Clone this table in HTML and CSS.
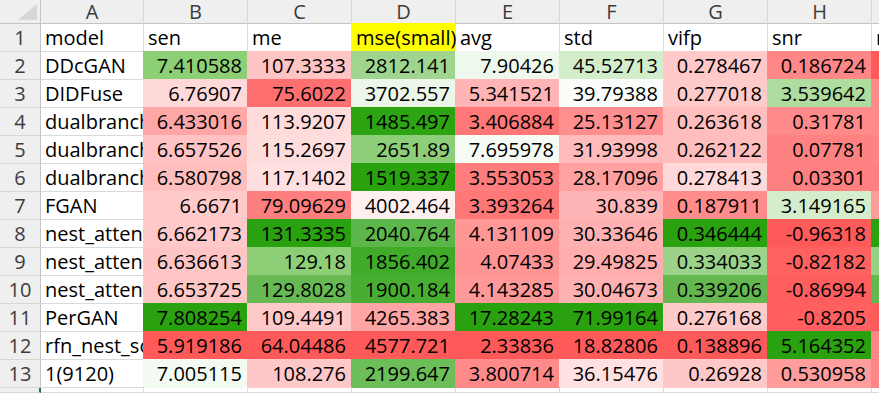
FILE: index.html
```html
<!DOCTYPE html>
<html>
<head>
<meta charset="utf-8">
<link rel="stylesheet" href="styles.css">
</head>
<body>
<div class="sheet">
  <div class="corner"><svg width="40" height="23" viewBox="0 0 40 23"><polygon points="37,4 37,20 18,20" fill="#d6d6d6"/></svg></div>
  <div class="ch">A</div><div class="ch">B</div><div class="ch">C</div><div class="ch">D</div><div class="ch">E</div><div class="ch">F</div><div class="ch">G</div><div class="ch">H</div><div class="ch">I</div>

  <div class="rh">1</div><div class="c">model</div><div class="c">sen</div><div class="c">me</div><div class="c f" style="--c:#ffff00">mse(small)</div><div class="c">avg</div><div class="c">std</div><div class="c">vifp</div><div class="c">snr</div><div class="c t">rmse</div>

  <div class="rh">2</div><div class="c t">DDcGAN</div>
  <div class="c n f" style="--c:#8ccf75">7.410588</div><div class="c n f" style="--c:#ffc4c4">107.3333</div><div class="c n f" style="--c:#9fd58e">2812.141</div><div class="c n f" style="--c:#eff8ec">7.90426</div><div class="c n f" style="--c:#d3ecca">45.52713</div><div class="c n f" style="--c:#ffc9c9">0.278467</div><div class="c n f" style="--c:#ff8787">0.186724</div><div class="c n f" style="--c:#ff5b5b"></div>

  <div class="rh">3</div><div class="c t">DIDFuse</div>
  <div class="c n f" style="--c:#ffd9d9">6.76907</div><div class="c n f" style="--c:#ff6f6f">75.6022</div><div class="c n f" style="--c:#ecf7e9">3702.557</div><div class="c n f" style="--c:#ffb5b5">5.341521</div><div class="c n f" style="--c:#fbfdfa">39.79388</div><div class="c n f" style="--c:#ffcaca">0.277018</div><div class="c n f" style="--c:#afdd9f">3.539642</div><div class="c n f" style="--c:#ff8b8b"></div>

  <div class="rh">4</div><div class="c t">dualbranch</div>
  <div class="c n f" style="--c:#ffa6a6">6.433016</div><div class="c n f" style="--c:#ffdbdb">113.9207</div><div class="c n f" style="--c:#2da512">1485.497</div><div class="c n f" style="--c:#ff7777">3.406884</div><div class="c n f" style="--c:#ff8f8f">25.13127</div><div class="c n f" style="--c:#ffbdbd">0.263618</div><div class="c n f" style="--c:#ff8a8a">0.31781</div><div class="c n f" style="--c:#ff8a8a"></div>

  <div class="rh">5</div><div class="c t">dualbranch</div>
  <div class="c n f" style="--c:#ffc3c3">6.657526</div><div class="c n f" style="--c:#ffdddd">115.2697</div><div class="c n f" style="--c:#8fce79">2651.89</div><div class="c n f" style="--c:#f6fbf4">7.695978</div><div class="c n f" style="--c:#ffbbbb">31.93998</div><div class="c n f" style="--c:#ffbdbd">0.262122</div><div class="c n f" style="--c:#ff8282">0.07781</div><div class="c n f" style="--c:#ff8484"></div>

  <div class="rh">6</div><div class="c t">dualbranch</div>
  <div class="c n f" style="--c:#ffbebe">6.580798</div><div class="c n f" style="--c:#ffdfdf">117.1402</div><div class="c n f" style="--c:#2aa10f">1519.337</div><div class="c n f" style="--c:#ff7d7d">3.553053</div><div class="c n f" style="--c:#ffa1a1">28.17096</div><div class="c n f" style="--c:#ffd9d9">0.278413</div><div class="c n f" style="--c:#ff8080">0.03301</div><div class="c n f" style="--c:#ff8080"></div>

  <div class="rh">7</div><div class="c t">FGAN</div>
  <div class="c n f" style="--c:#ffcaca">6.6671</div><div class="c n f" style="--c:#ff7f7f">79.09629</div><div class="c n f" style="--c:#fff0f0">4002.464</div><div class="c n f" style="--c:#ff7878">3.393264</div><div class="c n f" style="--c:#ffb5b5">30.839</div><div class="c n f" style="--c:#ff8b8b">0.187911</div><div class="c n f" style="--c:#d4edcb">3.149165</div><div class="c n f" style="--c:#ff9a9a"></div>

  <div class="rh">8</div><div class="c t">nest_attention</div>
  <div class="c n f" style="--c:#ffc9c9">6.662173</div><div class="c n f" style="--c:#2aa10f">131.3335</div><div class="c n f" style="--c:#5db649">2040.764</div><div class="c n f" style="--c:#ff9797">4.131109</div><div class="c n f" style="--c:#ffb1b1">30.33646</div><div class="c n f" style="--c:#2aa10f">0.346444</div><div class="c n f" style="--c:#ff5a5a">-0.96318</div><div class="c n f" style="--c:#2aa10f"></div>

  <div class="rh">9</div><div class="c t">nest_attention</div>
  <div class="c n f" style="--c:#ffc4c4">6.636613</div><div class="c n f" style="--c:#8dce76">129.18</div><div class="c n f" style="--c:#3fab29">1856.402</div><div class="c n f" style="--c:#ff9494">4.07433</div><div class="c n f" style="--c:#ffadad">29.49825</div><div class="c n f" style="--c:#9bd38a">0.334033</div><div class="c n f" style="--c:#ff6161">-0.82182</div><div class="c n f" style="--c:#96d283"></div>

  <div class="rh">10</div><div class="c t">nest_attention</div>
  <div class="c n f" style="--c:#ffc6c6">6.653725</div><div class="c n f" style="--c:#67ba53">129.8028</div><div class="c n f" style="--c:#48ae32">1900.184</div><div class="c n f" style="--c:#ff9999">4.143285</div><div class="c n f" style="--c:#ffb1b1">30.04673</div><div class="c n f" style="--c:#64b84f">0.339206</div><div class="c n f" style="--c:#ff5e5e">-0.86994</div><div class="c n f" style="--c:#62b84d"></div>

  <div class="rh">11</div><div class="c t">PerGAN</div>
  <div class="c n f" style="--c:#2aa10f">7.808254</div><div class="c n f" style="--c:#ffc9c9">109.4491</div><div class="c n f" style="--c:#ffa4a4">4265.383</div><div class="c n f" style="--c:#2aa10f">17.28243</div><div class="c n f" style="--c:#2aa10f">71.99164</div><div class="c n f" style="--c:#ffcaca">0.276168</div><div class="c n f" style="--c:#ff5f5f">-0.8205</div><div class="c n f" style="--c:#ff5b5b"></div>

  <div class="rh">12</div><div class="c t">rfn_nest_scale</div>
  <div class="c n f" style="--c:#ff5a5a">5.919186</div><div class="c n f" style="--c:#ff5a5a">64.04486</div><div class="c n f" style="--c:#ff5a5a">4577.721</div><div class="c n f" style="--c:#ff5a5a">2.33836</div><div class="c n f" style="--c:#ff5a5a">18.82806</div><div class="c n f" style="--c:#ff5a5a">0.138896</div><div class="c n f" style="--c:#2aa10f">5.164352</div><div class="c n f" style="--c:#ff8686"></div>

  <div class="rh">13</div><div class="c t">1(9120)</div>
  <div class="c n f" style="--c:#f3faf1">7.005115</div><div class="c n f" style="--c:#ffc8c8">108.276</div><div class="c n f" style="--c:#6bbe58">2199.647</div><div class="c n f" style="--c:#ff8a8a">3.800714</div><div class="c n f" style="--c:#ffe1e1">36.15476</div><div class="c n f" style="--c:#ffc8c8">0.26928</div><div class="c n f" style="--c:#ff9d9d">0.530958</div><div class="c n f" style="--c:#ff8686"></div>

  <div class="rh active"></div><div class="c"></div><div class="c"></div><div class="c"></div><div class="c"></div><div class="c"></div><div class="c"></div><div class="c"></div><div class="c"></div><div class="c"></div>
</div>
</body>
</html>
```

FILE: styles.css
```css
html, body {
  margin: 0;
  padding: 0;
  background: #ffffff;
  overflow: hidden;
}

.sheet {
  display: grid;
  grid-template-columns: 41px 103px repeat(7, 104px) 104px;
  grid-template-rows: 24px repeat(13, 28px) 5px;
  font-family: "Open Sans", "Noto Sans CJK SC", sans-serif;
  font-size: 20px;
  color: #000;
  width: 879px;
  overflow: hidden;
}

.sheet > div {
  box-sizing: border-box;
  white-space: nowrap;
}

.corner {
  background: #efefef;
  border-right: 1px solid #c4c4c4;
  border-bottom: 1px solid #c4c4c4;
  display: flex;
}

.ch {
  background: #efefef;
  color: #3c3c3c;
  border-right: 1px solid #d6d6d6;
  border-bottom: 1px solid #c4c4c4;
  text-align: center;
  line-height: 23px;
}

.rh {
  background: #efefef;
  color: #3c3c3c;
  border-right: 1px solid #c4c4c4;
  border-bottom: 1px solid #d6d6d6;
  text-align: center;
  line-height: 27px;
}

.rh.active {
  border-right: 2px solid #217346;
}

.c {
  border-right: 1px solid #dadada;
  border-bottom: 1px solid #dadada;
  padding: 0 4px;
  line-height: 27px;
}

.t {
  overflow: hidden;
}

.n {
  text-align: right;
  padding-right: 5px;
}

.f {
  background: var(--c);
  border-color: var(--c);
  box-shadow: -1px -1px 0 0 var(--c);
}
```
